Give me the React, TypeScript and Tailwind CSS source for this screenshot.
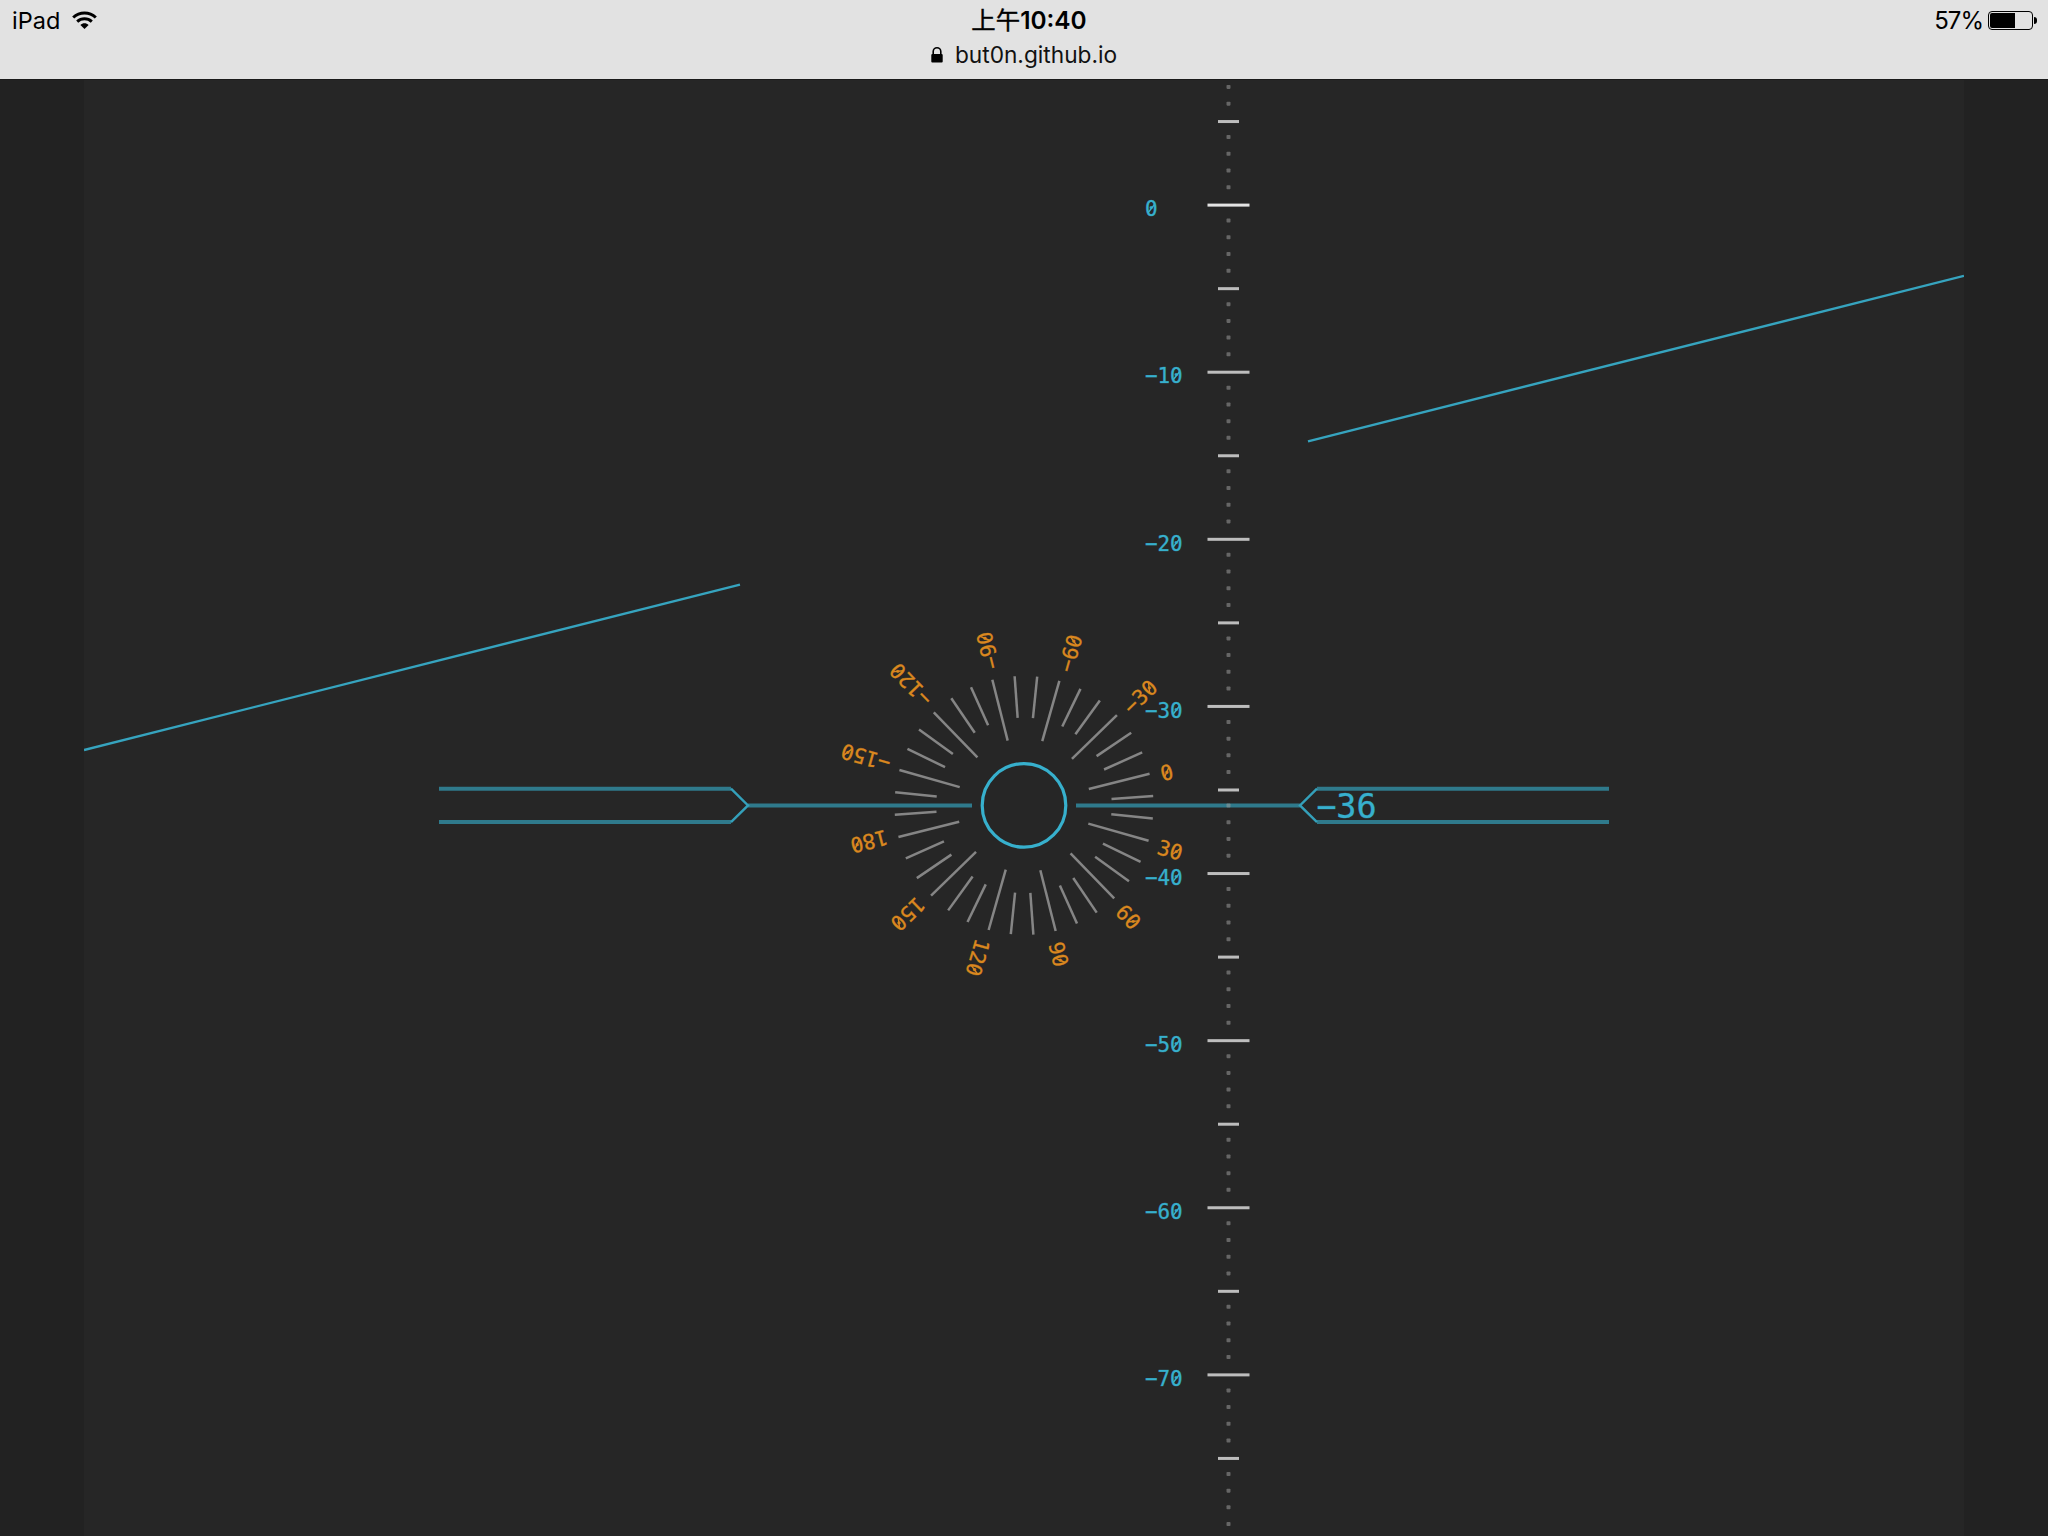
const CX = 1024;
const CY = 805.4;
const U = 1880 / 900;
const ROLL = -14.15;
const ZERO_Y = 205.1;
const SCALE_X = 1228.5;
const CYAN = '#37b0cd';
const MONO = '"DejaVu Sans Mono", monospace';

type Label = { text: string; x: number; y: number; size: number; fill: string };

function MonoLabel({ text, x, y, size, fill }: Label) {
  const adv = size * 0.602;
  return (
    <g stroke={fill}>
      <text x={x} y={y} fontSize={size} fontFamily={MONO} fill={fill} strokeWidth={0.6} strokeOpacity={0.6}>
        {text}
      </text>
      {text.split('').map((c, i) =>
        c === '0' ? (
          <line
            key={i}
            x1={x + adv * (i + 0.5) - size * 0.16}
            y1={y - size * 0.16}
            x2={x + adv * (i + 0.5) + size * 0.16}
            y2={y - size * 0.57}
            strokeWidth={size * 0.07}
          />
        ) : null,
      )}
    </g>
  );
}

function Compass() {
  const rays = Array.from({ length: 36 }, (_, i) => i * 10);
  return (
    <g transform={`translate(${CX} ${CY}) rotate(${ROLL})`}>
      {rays.map((deg) => {
        const major = deg % 30 === 0;
        const value = deg > 180 ? deg - 360 : deg;
        return (
          <g key={deg} transform={`rotate(${deg})`}>
            <line x1={(major ? 32 : 42) * U} x2={62 * U} y1={0} y2={0} stroke="#858585" strokeWidth={2.5} />
            {major && (
              <MonoLabel text={String(value).replace('-', '−')} x={140.2} y={10.4} size={20.9} fill="#da881f" />
            )}
          </g>
        );
      })}
    </g>
  );
}

function PitchScale() {
  const marks = Array.from({ length: 88 }, (_, i) => i - 8);
  return (
    <g>
      {marks.map((n) => {
        const y = ZERO_Y + n * 8 * U;
        if (n % 10 === 0) {
          return (
            <g key={n}>
              <rect x={SCALE_X - 21} y={y - 1.5} width={42} height={3} fill={n === 0 ? '#e4e4e4' : '#bdbdbd'} />
              <MonoLabel text={n === 0 ? '0' : `−${n}`} x={1144.9} y={y + 11.2} size={20.9} fill={CYAN} />
            </g>
          );
        }
        if (n % 5 === 0) {
          return <rect key={n} x={SCALE_X - 10.5} y={y - 1.5} width={21} height={3} fill="#bdbdbd" />;
        }
        return <rect key={n} x={SCALE_X - 2} y={y - 3.2} width={4} height={4} rx={0.8} fill="#9a9a9a" fillOpacity={0.55} />;
      })}
    </g>
  );
}

function Wing({ side }: { side: 1 | -1 }) {
  return (
    <g transform={`translate(${CX} ${CY}) scale(${side} 1)`} fill="none">
      <path d="M52 0H276M293 -16.7H585M293 16.7H585" stroke="#2f7a8c" strokeWidth={4} />
      <path d="M293 -16.7L276 0L293 16.7" stroke="#34a0ba" strokeWidth={2.4} />
    </g>
  );
}

function Instrument() {
  return (
    <svg className="block h-full w-[1880px] bg-[#262626]" viewBox="84 80 1880 1456">
      <g stroke="#36a4bf" strokeWidth={2.4}>
        <line x1={84} y1={750} x2={740} y2={584.6} />
        <line x1={1308} y1={441.3} x2={1964} y2={275.8} />
      </g>
      <Compass />
      <Wing side={-1} />
      <Wing side={1} />
      <PitchScale />
      <circle cx={CX} cy={CY} r={41.8} fill="none" stroke={CYAN} strokeWidth={3.2} />
      <MonoLabel text="−36" x={1316.2} y={817.6} size={33.4} fill={CYAN} />
    </svg>
  );
}

function Wifi() {
  return (
    <svg className="block h-[19px] w-[25px]" viewBox="0 0 25 19" fill="none" stroke="#000" strokeWidth={3}>
      <path d="M1.2 6.5C7.6 .4 17.4 .4 23.8 6.5" />
      <path d="M5.2 10.7C9.4 6.9 15.6 6.9 19.8 10.7" />
      <path d="M12.5 18L8.4 13.9C10.7 11.7 14.3 11.7 16.6 13.9Z" fill="#000" stroke="none" />
    </svg>
  );
}

function StatusBar() {
  return (
    <header className="h-[79px] shrink-0 bg-[#e2e2e2] font-[Inter,'Noto_Sans_CJK_SC',sans-serif] text-black">
      <div className="grid h-[41px] grid-cols-3 items-center pl-3 pr-[11px]">
        <div className="flex items-center">
          <span className="w-[60px] text-[23.5px] leading-none">iPad</span>
          <Wifi />
        </div>
        <div className="whitespace-nowrap pl-[9px] text-center text-[24.4px] font-semibold leading-none">
          <span className="font-normal [-webkit-text-stroke:0.4px_#000]">上午</span>10:40
        </div>
        <div className="flex items-center justify-end">
          <span className="mr-[5px] text-[24px] leading-none tracking-[-1px]">57%</span>
          <div className="h-[19px] w-[45px] rounded-[4px] border border-black p-px">
            <div className="h-full w-[25px] rounded-l-[2px] bg-black" />
          </div>
          <div className="ml-px h-[7px] w-[3px] rounded-r-full bg-black" />
        </div>
      </div>
      <div className="flex h-[28px] items-center justify-center">
        <svg className="mr-[12px] block h-[16px] w-[12px]" viewBox="0 0 12 16">
          <path d="M2.2 8V4.6a3.8 3.8 0 0 1 7.6 0V8" fill="none" stroke="#000" strokeWidth={1.6} />
          <rect x={0.3} y={7} width={11.4} height={8.4} rx={1} />
        </svg>
        <span className="text-[22.7px] leading-none text-[#111]">but0n.github.io</span>
      </div>
    </header>
  );
}

export default function App() {
  return (
    <div className="flex h-[1536px] w-[2048px] flex-col overflow-hidden bg-[#222222]">
      <StatusBar />
      <main className="flex min-h-0 flex-1 justify-center border-t border-[#1a1a1a]">
        <Instrument />
      </main>
    </div>
  );
}
